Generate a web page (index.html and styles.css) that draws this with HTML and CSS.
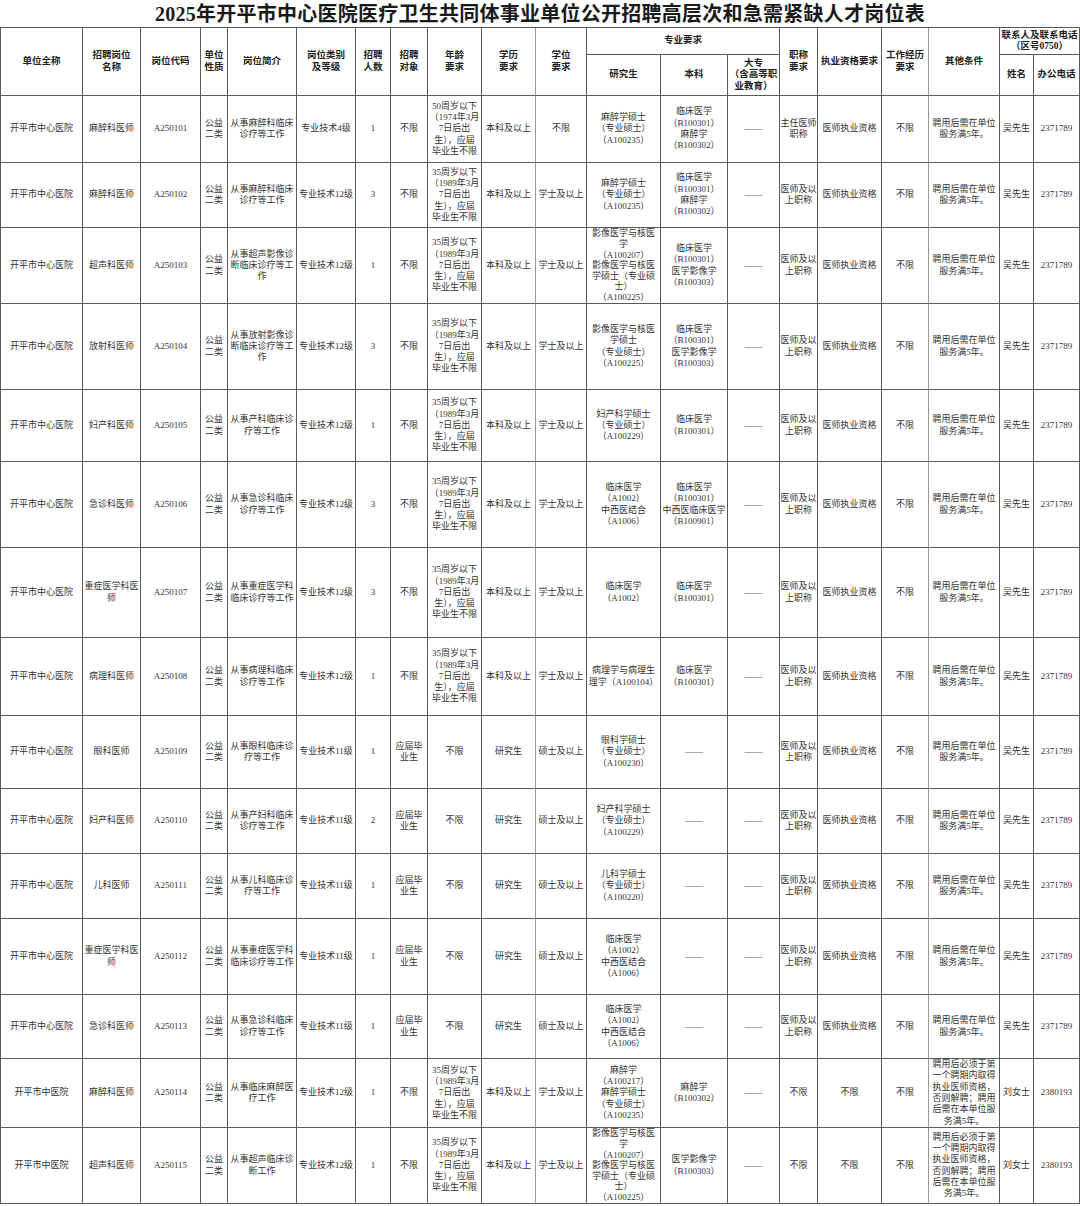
FILE: index.html
```html
<!DOCTYPE html>
<html lang="zh-CN">
<head>
<meta charset="utf-8">
<title>岗位表</title>
<link rel="stylesheet" href="styles.css">
</head>
<body>
<div class="title">2025年开平市中心医院医疗卫生共同体事业单位公开招聘高层次和急需紧缺人才岗位表</div>
<div class="sheet">
  <div class="hd rs2">单位全称</div>
  <div class="hd rs2">招聘岗位<br>名称</div>
  <div class="hd rs2">岗位代码</div>
  <div class="hd rs2">单位<br>性质</div>
  <div class="hd rs2">岗位简介</div>
  <div class="hd rs2">岗位类别<br>及等级</div>
  <div class="hd rs2">招聘<br>人数</div>
  <div class="hd rs2">招聘<br>对象</div>
  <div class="hd rs2">年龄<br>要求</div>
  <div class="hd rs2 lt">学历<br>要求</div>
  <div class="hd rs2">学位<br>要求</div>
  <div class="hd cs3">专业要求</div>
  <div class="hd rs2">职称<br>要求</div>
  <div class="hd rs2">执业资格要求</div>
  <div class="hd rs2 lt">工作经历<br>要求</div>
  <div class="hd rs2">其他条件</div>
  <div class="hd cs2">联系人及联系电话<br>（区号0750）</div>
  <div class="hd">研究生</div>
  <div class="hd">本科</div>
  <div class="hd">大专<br>（含高等职<br>业教育）</div>
  <div class="hd">姓名</div>
  <div class="hd">办公电话</div>

  <div class="row">
    <div>开平市中心医院</div><div>麻醉科医师</div><div>A250101</div><div>公益<br>二类</div><div>从事麻醉科临床<br>诊疗等工作</div><div>专业技术4级</div><div>1</div><div>不限</div><div>50周岁以下<br>（1974年3月<br>7日后出<br>生），应届<br>毕业生不限</div><div>本科及以上</div><div>不限</div><div>麻醉学硕士<br>（专业硕士）<br>（A100235）</div><div>临床医学<br>（B100301）<br>麻醉学<br>（B100302）</div><div class="dash">——</div><div>主任医师<br>职称</div><div>医师执业资格</div><div>不限</div><div>聘用后需在单位<br>服务满5年。</div><div>吴先生</div><div>2371789</div>
  </div>
  <div class="row">
    <div>开平市中心医院</div><div>麻醉科医师</div><div>A250102</div><div>公益<br>二类</div><div>从事麻醉科临床<br>诊疗等工作</div><div>专业技术12级</div><div>3</div><div>不限</div><div>35周岁以下<br>（1989年3月<br>7日后出<br>生），应届<br>毕业生不限</div><div>本科及以上</div><div>学士及以上</div><div>麻醉学硕士<br>（专业硕士）<br>（A100235）</div><div>临床医学<br>（B100301）<br>麻醉学<br>（B100302）</div><div class="dash">——</div><div>医师及以<br>上职称</div><div>医师执业资格</div><div>不限</div><div>聘用后需在单位<br>服务满5年。</div><div>吴先生</div><div>2371789</div>
  </div>
  <div class="row">
    <div>开平市中心医院</div><div>超声科医师</div><div>A250103</div><div>公益<br>二类</div><div>从事超声影像诊<br>断临床诊疗等工<br>作</div><div>专业技术12级</div><div>1</div><div>不限</div><div>35周岁以下<br>（1989年3月<br>7日后出<br>生），应届<br>毕业生不限</div><div>本科及以上</div><div>学士及以上</div><div class="tight">影像医学与核医<br>学<br>（A100207）<br>影像医学与核医<br>学硕士（专业硕<br>士）<br>（A100225）</div><div>临床医学<br>（B100301）<br>医学影像学<br>（B100303）</div><div class="dash">——</div><div>医师及以<br>上职称</div><div>医师执业资格</div><div>不限</div><div>聘用后需在单位<br>服务满5年。</div><div>吴先生</div><div>2371789</div>
  </div>
  <div class="row">
    <div>开平市中心医院</div><div>放射科医师</div><div>A250104</div><div>公益<br>二类</div><div>从事放射影像诊<br>断临床诊疗等工<br>作</div><div>专业技术12级</div><div>3</div><div>不限</div><div>35周岁以下<br>（1989年3月<br>7日后出<br>生），应届<br>毕业生不限</div><div>本科及以上</div><div>学士及以上</div><div>影像医学与核医<br>学硕士<br>（专业硕士）<br>（A100225）</div><div>临床医学<br>（B100301）<br>医学影像学<br>（B100303）</div><div class="dash">——</div><div>医师及以<br>上职称</div><div>医师执业资格</div><div>不限</div><div>聘用后需在单位<br>服务满5年。</div><div>吴先生</div><div>2371789</div>
  </div>
  <div class="row">
    <div>开平市中心医院</div><div>妇产科医师</div><div>A250105</div><div>公益<br>二类</div><div>从事产科临床诊<br>疗等工作</div><div>专业技术12级</div><div>1</div><div>不限</div><div>35周岁以下<br>（1989年3月<br>7日后出<br>生），应届<br>毕业生不限</div><div>本科及以上</div><div>学士及以上</div><div>妇产科学硕士<br>（专业硕士）<br>（A100229）</div><div>临床医学<br>（B100301）</div><div class="dash">——</div><div>医师及以<br>上职称</div><div>医师执业资格</div><div>不限</div><div>聘用后需在单位<br>服务满5年。</div><div>吴先生</div><div>2371789</div>
  </div>
  <div class="row">
    <div>开平市中心医院</div><div>急诊科医师</div><div>A250106</div><div>公益<br>二类</div><div>从事急诊科临床<br>诊疗等工作</div><div>专业技术12级</div><div>3</div><div>不限</div><div>35周岁以下<br>（1989年3月<br>7日后出<br>生），应届<br>毕业生不限</div><div>本科及以上</div><div>学士及以上</div><div>临床医学<br>（A1002）<br>中西医结合<br>（A1006）</div><div>临床医学<br>（B100301）<br>中西医临床医学<br>（B100901）</div><div class="dash">——</div><div>医师及以<br>上职称</div><div>医师执业资格</div><div>不限</div><div>聘用后需在单位<br>服务满5年。</div><div>吴先生</div><div>2371789</div>
  </div>
  <div class="row">
    <div>开平市中心医院</div><div>重症医学科医<br>师</div><div>A250107</div><div>公益<br>二类</div><div>从事重症医学科<br>临床诊疗等工作</div><div>专业技术12级</div><div>3</div><div>不限</div><div>35周岁以下<br>（1989年3月<br>7日后出<br>生），应届<br>毕业生不限</div><div>本科及以上</div><div>学士及以上</div><div>临床医学<br>（A1002）</div><div>临床医学<br>（B100301）</div><div class="dash">——</div><div>医师及以<br>上职称</div><div>医师执业资格</div><div>不限</div><div>聘用后需在单位<br>服务满5年。</div><div>吴先生</div><div>2371789</div>
  </div>
  <div class="row">
    <div>开平市中心医院</div><div>病理科医师</div><div>A250108</div><div>公益<br>二类</div><div>从事病理科临床<br>诊疗等工作</div><div>专业技术12级</div><div>1</div><div>不限</div><div>35周岁以下<br>（1989年3月<br>7日后出<br>生），应届<br>毕业生不限</div><div>本科及以上</div><div>学士及以上</div><div>病理学与病理生<br>理学（A100104）</div><div>临床医学<br>（B100301）</div><div class="dash">——</div><div>医师及以<br>上职称</div><div>医师执业资格</div><div>不限</div><div>聘用后需在单位<br>服务满5年。</div><div>吴先生</div><div>2371789</div>
  </div>
  <div class="row">
    <div>开平市中心医院</div><div>眼科医师</div><div>A250109</div><div>公益<br>二类</div><div>从事眼科临床诊<br>疗等工作</div><div>专业技术11级</div><div>1</div><div>应届毕<br>业生</div><div>不限</div><div>研究生</div><div>硕士及以上</div><div>眼科学硕士<br>（专业硕士）<br>（A100230）</div><div class="dash">——</div><div class="dash">——</div><div>医师及以<br>上职称</div><div>医师执业资格</div><div>不限</div><div>聘用后需在单位<br>服务满5年。</div><div>吴先生</div><div>2371789</div>
  </div>
  <div class="row">
    <div>开平市中心医院</div><div>妇产科医师</div><div>A250110</div><div>公益<br>二类</div><div>从事产妇科临床<br>诊疗等工作</div><div>专业技术11级</div><div>2</div><div>应届毕<br>业生</div><div>不限</div><div>研究生</div><div>硕士及以上</div><div>妇产科学硕士<br>（专业硕士）<br>（A100229）</div><div class="dash">——</div><div class="dash">——</div><div>医师及以<br>上职称</div><div>医师执业资格</div><div>不限</div><div>聘用后需在单位<br>服务满5年。</div><div>吴先生</div><div>2371789</div>
  </div>
  <div class="row">
    <div>开平市中心医院</div><div>儿科医师</div><div>A250111</div><div>公益<br>二类</div><div>从事儿科临床诊<br>疗等工作</div><div>专业技术11级</div><div>1</div><div>应届毕<br>业生</div><div>不限</div><div>研究生</div><div>硕士及以上</div><div>儿科学硕士<br>（专业硕士）<br>（A100220）</div><div class="dash">——</div><div class="dash">——</div><div>医师及以<br>上职称</div><div>医师执业资格</div><div>不限</div><div>聘用后需在单位<br>服务满5年。</div><div>吴先生</div><div>2371789</div>
  </div>
  <div class="row">
    <div>开平市中心医院</div><div>重症医学科医<br>师</div><div>A250112</div><div>公益<br>二类</div><div>从事重症医学科<br>临床诊疗等工作</div><div>专业技术11级</div><div>1</div><div>应届毕<br>业生</div><div>不限</div><div>研究生</div><div>硕士及以上</div><div>临床医学<br>（A1002）<br>中西医结合<br>（A1006）</div><div class="dash">——</div><div class="dash">——</div><div>医师及以<br>上职称</div><div>医师执业资格</div><div>不限</div><div>聘用后需在单位<br>服务满5年。</div><div>吴先生</div><div>2371789</div>
  </div>
  <div class="row">
    <div>开平市中心医院</div><div>急诊科医师</div><div>A250113</div><div>公益<br>二类</div><div>从事急诊科临床<br>诊疗等工作</div><div>专业技术11级</div><div>1</div><div>应届毕<br>业生</div><div>不限</div><div>研究生</div><div>硕士及以上</div><div>临床医学<br>（A1002）<br>中西医结合<br>（A1006）</div><div class="dash">——</div><div class="dash">——</div><div>医师及以<br>上职称</div><div>医师执业资格</div><div>不限</div><div>聘用后需在单位<br>服务满5年。</div><div>吴先生</div><div>2371789</div>
  </div>
  <div class="row">
    <div>开平市中医院</div><div>麻醉科医师</div><div>A250114</div><div>公益<br>二类</div><div>从事临床麻醉医<br>疗工作</div><div>专业技术12级</div><div>1</div><div>不限</div><div>35周岁以下<br>（1989年3月<br>7日后出<br>生），应届<br>毕业生不限</div><div>本科及以上</div><div>学士及以上</div><div>麻醉学<br>（A100217）<br>麻醉学硕士<br>（专业硕士）<br>（A100235）</div><div>麻醉学<br>（B100302）</div><div class="dash">——</div><div>不限</div><div>不限</div><div>不限</div><div>聘用后必须于第<br>一个聘期内取得<br>执业医师资格，<br>否则解聘；聘用<br>后需在本单位服<br>务满5年。</div><div>刘女士</div><div>2380193</div>
  </div>
  <div class="row">
    <div>开平市中医院</div><div>超声科医师</div><div>A250115</div><div>公益<br>二类</div><div>从事超声临床诊<br>断工作</div><div>专业技术12级</div><div>1</div><div>不限</div><div>35周岁以下<br>（1989年3月<br>7日后出<br>生），应届<br>毕业生不限</div><div>本科及以上</div><div>学士及以上</div><div class="tight">影像医学与核医<br>学<br>（A100207）<br>影像医学与核医<br>学硕士（专业硕<br>士）<br>（A100225）</div><div>医学影像学<br>（B100303）</div><div class="dash">——</div><div>不限</div><div>不限</div><div>不限</div><div>聘用后必须于第<br>一个聘期内取得<br>执业医师资格，<br>否则解聘；聘用<br>后需在本单位服<br>务满5年。</div><div>刘女士</div><div>2380193</div>
  </div>
</div>
</body>
</html>
```

FILE: styles.css
```css
* {
  box-sizing: border-box;
}

html,
body {
  margin: 0;
  padding: 0;
  background: #ffffff;
}

body {
  width: 1080px;
  font-family: "Liberation Serif", "Noto Sans CJK SC", serif;
  color: #333333;
}

.title {
  height: 27px;
  padding-top: 1px;
  line-height: 26px;
  text-align: center;
  font-size: 20px;
  font-weight: bold;
  letter-spacing: 0.25px;
  color: #1a1a1a;
  white-space: nowrap;
}

.sheet {
  width: 1080px;
  display: grid;
  grid-template-columns: 82px 58px 60px 27px 69px 59px 35px 37px 54px 54px 51px 74px 67px 52px 38px 64px 47px 71px 34px 46px;
  grid-template-rows: 27px 41px 67px 65px 76px 86px 72px 86px 90px 78px 73px 65px 65px 76px 64px 69px 76px;
  border-top: 1px solid #5a5a5a;
  border-left: 1px solid #5a5a5a;
}

.sheet > div,
.row > div {
  display: flex;
  flex-direction: column;
  align-items: center;
  justify-content: center;
  text-align: center;
  border-right: 1px solid #5a5a5a;
  border-bottom: 1px solid #5a5a5a;
  font-size: 9px;
  line-height: 11.3px;
  white-space: nowrap;
}

.sheet > .row {
  display: contents;
}

.row > div:nth-child(10),
.row > div:nth-child(17),
.sheet > .hd.lt {
  border-right-color: #9a9a9a;
}

.sheet > .hd {
  font-size: 9.5px;
  line-height: 11.5px;
  font-weight: bold;
  color: #222222;
}

.rs2 {
  grid-row: span 2;
}

.cs3 {
  grid-column: span 3;
}

.cs2 {
  grid-column: span 2;
}

.row > .dash {
  color: #666666;
}

.row > .tight {
  line-height: 10.6px;
}
```
